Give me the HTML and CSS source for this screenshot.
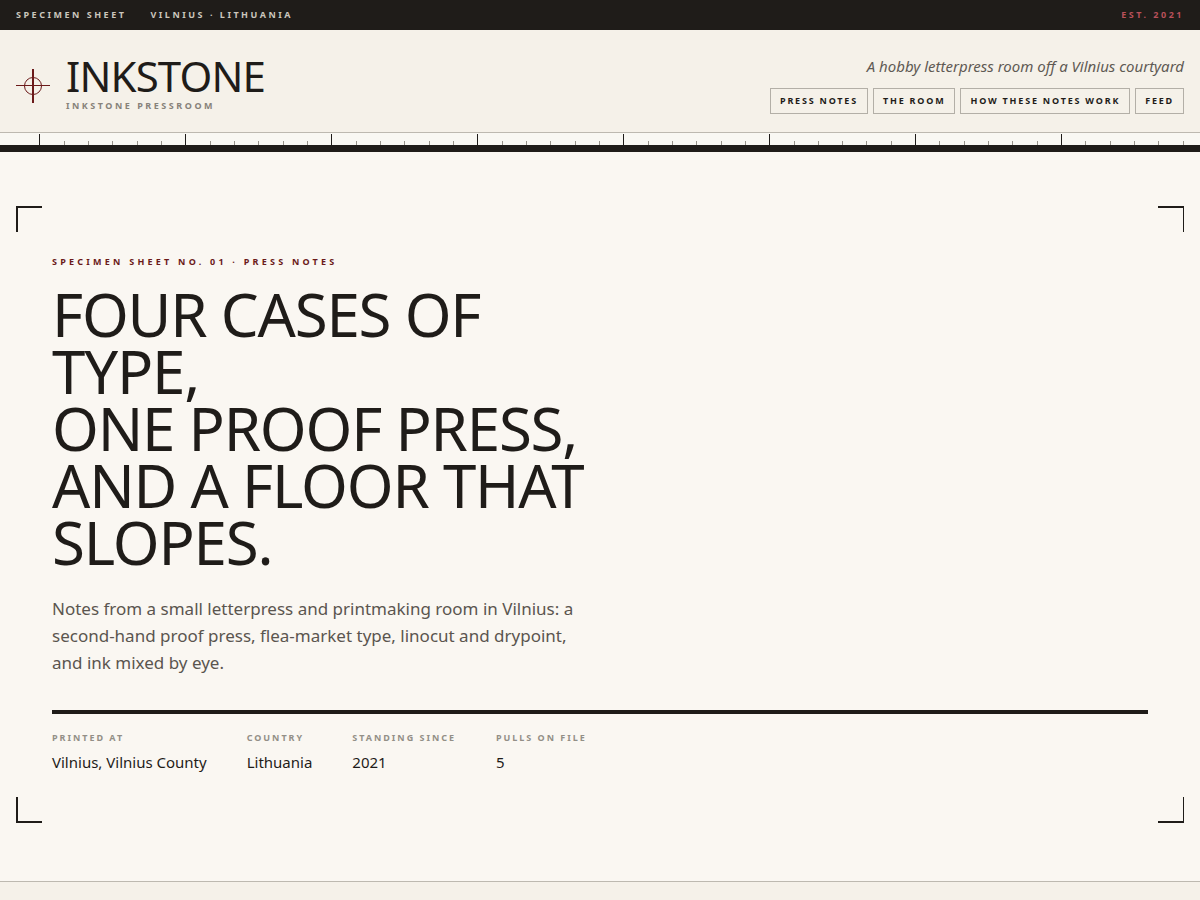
FILE: index.html
```html
<!DOCTYPE html>
<html lang="en">
<head>
    <meta charset="UTF-8">
    <meta name="viewport" content="width=device-width, initial-scale=1.0">
    <title>Inkstone Pressroom</title>
    <link rel="stylesheet" href="styles.css">
</head>
<body>
    <div class="topbar">
        <span>Specimen sheet</span>
        <span>Vilnius · Lithuania</span>
        <span class="est">Est. 2021</span>
    </div>

    <header class="header">
        <a class="brand" href="#">
            <svg class="mark" viewBox="0 0 34 34" aria-hidden="true">
                <circle cx="17" cy="17" r="8.5" fill="none" stroke="#6b1a1a" stroke-width="1"/>
                <path d="M0 16.5H34" stroke="#6b1a1a" stroke-width="1"/>
                <path d="M17 0V34" stroke="#6b1a1a" stroke-width="2"/>
            </svg>
            <span class="brand-text">
                <span class="brand-name">INKSTONE</span>
                <span class="brand-sub">Inkstone Pressroom</span>
            </span>
        </a>
        <div class="header-side">
            <p class="tagline">A hobby letterpress room off a Vilnius courtyard</p>
            <nav class="nav">
                <a href="#">Press notes</a>
                <a href="#">The room</a>
                <a href="#">How these notes work</a>
                <a href="#">Feed</a>
            </nav>
        </div>
    </header>

    <!-- Ruler: every sixth tick is a long one -->
    <div class="ruler" aria-hidden="true">
        <i></i><i></i><i></i><i></i><i></i><i></i>
        <i></i><i></i><i></i><i></i><i></i><i></i>
        <i></i><i></i><i></i><i></i><i></i><i></i>
        <i></i><i></i><i></i><i></i><i></i><i></i>
        <i></i><i></i><i></i><i></i><i></i><i></i>
        <i></i><i></i><i></i><i></i><i></i><i></i>
        <i></i><i></i><i></i><i></i><i></i><i></i>
        <i></i><i></i><i></i><i></i><i></i><i></i>
    </div>

    <main>
        <section class="hero">
            <div class="sheet">
                <span class="crop crop-tl"></span>
                <span class="crop crop-tr"></span>
                <span class="crop crop-bl"></span>
                <span class="crop crop-br"></span>

                <p class="kicker">Specimen sheet No. 01 · Press notes</p>
                <h1 class="title">Four cases of type,<br>one proof press,<br>and a floor that slopes.</h1>
                <p class="lede">Notes from a small letterpress and printmaking room in Vilnius: a second-hand proof press, flea-market type, linocut and drypoint, and ink mixed by eye.</p>

                <dl class="facts">
                    <div>
                        <dt>Printed at</dt>
                        <dd>Vilnius, Vilnius County</dd>
                    </div>
                    <div>
                        <dt>Country</dt>
                        <dd>Lithuania</dd>
                    </div>
                    <div>
                        <dt>Standing since</dt>
                        <dd>2021</dd>
                    </div>
                    <div>
                        <dt>Pulls on file</dt>
                        <dd>5</dd>
                    </div>
                </dl>
            </div>
        </section>
    </main>
</body>
</html>
```
FILE: styles.css
```css
/* Global Styles */
* {
    box-sizing: border-box;
}

body {
    margin: 0;
    min-height: 100vh;
    font-family: "Noto Sans", sans-serif;
    background: #f5f1e9;
    color: #1f1c19;
}

h1, p, dl, dd {
    margin: 0;
}

a {
    color: inherit;
    text-decoration: none;
}

/* Top bar */
.topbar {
    display: flex;
    gap: 24px;
    padding: 7px 16px;
    background: #1f1c19;
    color: #cbc6bd;
    font-size: 9px;
    line-height: 16px;
    font-weight: 700;
    letter-spacing: 0.28em;
    text-transform: uppercase;
}

.est {
    margin-left: auto;
    color: #b8505a;
}

/* Header */
.header {
    display: flex;
    justify-content: space-between;
    align-items: flex-end;
    padding: 24px 16px 18px;
    border-bottom: 1px solid #bdb9b0;
}

.brand {
    display: flex;
    align-items: center;
    gap: 16px;
}

.mark {
    width: 34px;
    height: 34px;
}

.brand-text {
    display: flex;
    flex-direction: column;
    gap: 4px;
}

.brand-name {
    font-size: 42px;
    line-height: 36px;
    letter-spacing: -0.02em;
}

.brand-sub {
    font-size: 9px;
    line-height: 16px;
    font-weight: 700;
    letter-spacing: 0.28em;
    text-transform: uppercase;
    color: #87827a;
}

.header-side {
    display: flex;
    flex-direction: column;
    align-items: flex-end;
    gap: 10px;
}

.tagline {
    font-size: 15px;
    line-height: 24px;
    font-style: italic;
    color: #5f5a54;
}

.nav {
    display: flex;
    gap: 5px;
}

.nav a {
    padding: 4px 9px;
    border: 1px solid #b3afa7;
    font-size: 9px;
    line-height: 16px;
    font-weight: 700;
    letter-spacing: 0.2em;
    text-transform: uppercase;
}

/* Ruler */
.ruler {
    display: flex;
    align-items: flex-end;
    height: 19px;
    padding: 0 16px;
    background: #f9f8f3;
    border-bottom: 7px solid #1f1c19;
}

.ruler i {
    flex: 1;
    height: 4px;
    border-right: 1px solid #96928a;
}

.ruler i:nth-child(6n + 1) {
    height: 11px;
    border-color: #1f1c19;
}

/* Hero */
.hero {
    padding: 54px 16px 58px;
    background: #faf7f2;
    border-bottom: 1px solid #bdb9b0;
}

.sheet {
    position: relative;
    padding: 48px 36px 49px;
}

.crop {
    position: absolute;
    width: 26px;
    height: 26px;
    border: 0 solid #1f1c19;
}

.crop-tl {
    top: 0;
    left: 0;
    border-width: 2px 0 0 2px;
}

.crop-tr {
    top: 0;
    right: 0;
    border-width: 2px 1px 0 0;
}

.crop-bl {
    bottom: 0;
    left: 0;
    border-width: 0 0 2px 2px;
}

.crop-br {
    bottom: 0;
    right: 0;
    border-width: 0 1px 2px 0;
}

.kicker {
    margin-bottom: 16px;
    font-size: 9px;
    line-height: 16px;
    font-weight: 700;
    letter-spacing: 0.36em;
    text-transform: uppercase;
    color: #6b1a1a;
}

.title {
    max-width: 560px;
    margin-bottom: 24px;
    font-size: 60px;
    line-height: 57px;
    font-weight: 400;
    letter-spacing: -0.02em;
    text-transform: uppercase;
}

.lede {
    max-width: 530px;
    margin-bottom: 34px;
    font-size: 17px;
    line-height: 27px;
    color: #5a554f;
}

/* Facts */
.facts {
    display: flex;
    flex-wrap: wrap;
    gap: 16px 40px;
    padding-top: 16px;
    border-top: 4px solid #1f1c19;
}

.facts dt {
    margin-bottom: 4px;
    font-size: 9px;
    line-height: 16px;
    font-weight: 700;
    letter-spacing: 0.22em;
    text-transform: uppercase;
    color: #938f87;
}

.facts dd {
    font-size: 15px;
    line-height: 24px;
}
```
